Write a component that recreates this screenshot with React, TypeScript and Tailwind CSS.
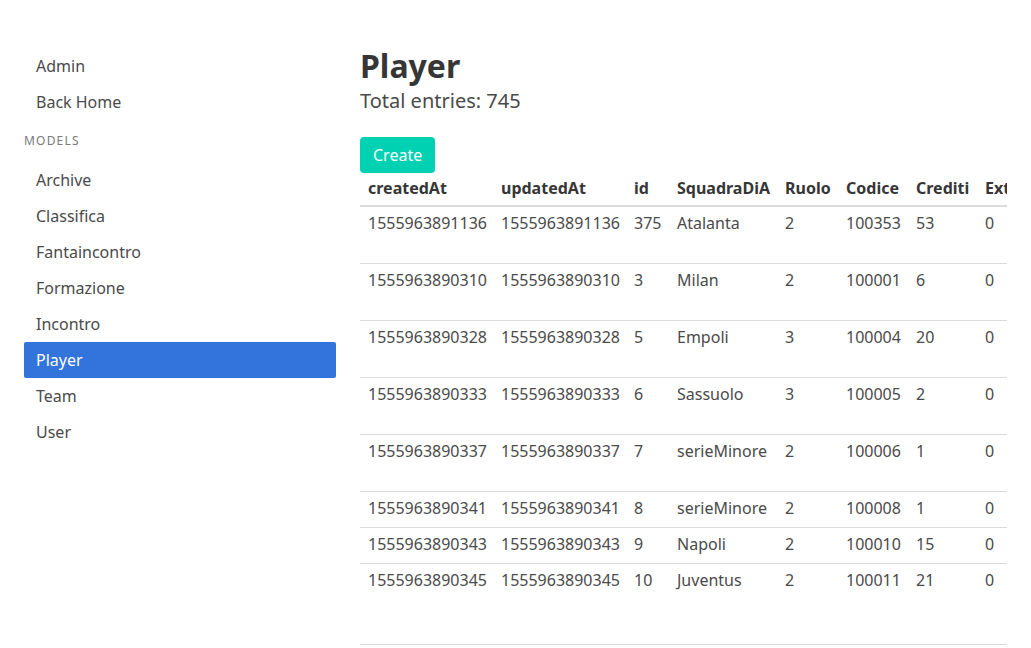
import React from 'react';

const menuTop = ['Admin', 'Back Home'];
const models = ['Archive', 'Classifica', 'Fantaincontro', 'Formazione', 'Incontro', 'Player', 'Team', 'User'];

const columns = [
  { key: 'createdAt', w: 'w-[133px]' },
  { key: 'updatedAt', w: 'w-[133px]' },
  { key: 'id', w: 'w-[43px]' },
  { key: 'SquadraDiA', w: 'w-[108px]' },
  { key: 'Ruolo', w: 'w-[61px]' },
  { key: 'Codice', w: 'w-[70px]' },
  { key: 'Crediti', w: 'w-[69px]' },
  { key: 'Extra', w: 'w-[80px]' },
];

type Row = { cells: string[]; h: string };

const rows: Row[] = [
  { cells: ['1555963891136', '1555963891136', '375', 'Atalanta', '2', '100353', '53', '0'], h: 'h-[57px]' },
  { cells: ['1555963890310', '1555963890310', '3', 'Milan', '2', '100001', '6', '0'], h: 'h-[57px]' },
  { cells: ['1555963890328', '1555963890328', '5', 'Empoli', '3', '100004', '20', '0'], h: 'h-[57px]' },
  { cells: ['1555963890333', '1555963890333', '6', 'Sassuolo', '3', '100005', '2', '0'], h: 'h-[57px]' },
  { cells: ['1555963890337', '1555963890337', '7', 'serieMinore', '2', '100006', '1', '0'], h: 'h-[57px]' },
  { cells: ['1555963890341', '1555963890341', '8', 'serieMinore', '2', '100008', '1', '0'], h: 'h-[36px]' },
  { cells: ['1555963890343', '1555963890343', '9', 'Napoli', '2', '100010', '15', '0'], h: 'h-[36px]' },
  { cells: ['1555963890345', '1555963890345', '10', 'Juventus', '2', '100011', '21', '0'], h: 'h-[81px]' },
];

export default function App() {
  return (
    <div className="min-h-[648px] bg-white px-[24px] pt-[48px] font-['Noto_Sans',sans-serif] text-[16px] text-[#4a4a4a]">
      <div className="flex gap-[24px]">
        {/* Sidebar */}
        <aside className="w-[312px] shrink-0">
          <ul>
            {menuTop.map((item) => (
              <li key={item} className="flex h-[36px] items-center px-[12px] leading-[24px]">
                {item}
              </li>
            ))}
          </ul>
          <p className="my-[12px] text-[12px] uppercase leading-[18px] tracking-[0.1em] text-[#7a7a7a]">Models</p>
          <ul>
            {models.map((item) => (
              <li
                key={item}
                className={
                  item === 'Player'
                    ? 'flex h-[36px] items-center rounded-[2px] bg-[#3273dc] px-[12px] leading-[24px] text-white'
                    : 'flex h-[36px] items-center px-[12px] leading-[24px]'
                }
              >
                {item}
              </li>
            ))}
          </ul>
        </aside>

        {/* Main */}
        <main className="min-w-0 flex-1">
          <h1 className="mb-[4px] text-[32px] font-bold leading-[36px] text-[#363636]">Player</h1>
          <p className="text-[20px] leading-[25px] text-[#4a4a4a]">Total entries: 745</p>
          <button className="mt-[24px] flex h-[36px] items-center rounded-[4px] bg-[#00d1b2] px-[13px] text-white">
            Create
          </button>

          <div className="w-[647px] overflow-hidden">
            <table className="w-[697px] table-fixed border-collapse text-left">
              <thead>
                <tr className="h-[33px] border-b-2 border-[#dbdbdb]">
                  {columns.map((c) => (
                    <th key={c.key} className={`${c.w} px-[8px] pt-[4px] pb-[5px] align-top font-bold leading-[23px] whitespace-nowrap text-[#363636]`}>
                      {c.key}
                    </th>
                  ))}
                </tr>
              </thead>
              <tbody>
                {rows.map((r, i) => (
                  <tr key={i} className={`${r.h} border-b border-[#dbdbdb]`}>
                    {r.cells.map((v, j) => (
                      <td key={j} className="px-[8px] pt-[5px] align-top leading-[23px] whitespace-nowrap">
                        {v}
                      </td>
                    ))}
                  </tr>
                ))}
              </tbody>
            </table>
          </div>
        </main>
      </div>
    </div>
  );
}
